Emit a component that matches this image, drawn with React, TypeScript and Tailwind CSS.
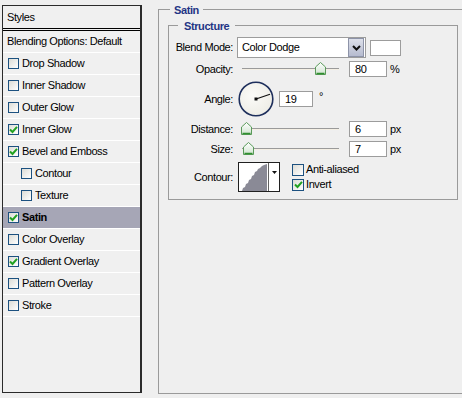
import React from "react";

const layers = [
  { name: "Drop Shadow", on: false },
  { name: "Inner Shadow", on: false },
  { name: "Outer Glow", on: false },
  { name: "Inner Glow", on: true },
  { name: "Bevel and Emboss", on: true },
  { name: "Contour", on: false, sub: true },
  { name: "Texture", on: false, sub: true },
  { name: "Satin", on: true, active: true },
  { name: "Color Overlay", on: false },
  { name: "Gradient Overlay", on: true },
  { name: "Pattern Overlay", on: false },
  { name: "Stroke", on: false },
];

function CheckBox({ on, big }: { on: boolean; big?: boolean }) {
  return (
    <span
      className={
        big
          ? "flex h-[12px] w-[12px] shrink-0 items-center justify-center border border-[#1c5180] bg-linear-to-br from-[#dcdcd6] to-white"
          : "flex h-[11px] w-[11px] shrink-0 items-center justify-center border border-[#1c5180] bg-linear-to-br from-[#dcdcd6] to-white"
      }
    >
      {on && (
        <svg width="9" height="9" viewBox="0 0 9 9">
          <path d="M1 4.5 L3.5 7 L8 1.8" fill="none" stroke="#21a121" strokeWidth="2" />
        </svg>
      )}
    </span>
  );
}

function Thumb() {
  return (
    <svg width="11" height="13" viewBox="0 0 11 13">
      <defs>
        <linearGradient id="tg" x1="0" y1="0" x2="0" y2="1">
          <stop offset="0" stopColor="#ffffff" />
          <stop offset="1" stopColor="#cfe3cf" />
        </linearGradient>
      </defs>
      <path d="M5.5 0.5 L10.5 5 L10.5 12.5 L0.5 12.5 L0.5 5 Z" fill="url(#tg)" stroke="#5a9a5a" />
      <path d="M1.5 11.5 H9.5" stroke="#2f8f2f" strokeWidth="1.5" />
    </svg>
  );
}

function Slider({ left }: { left: number }) {
  return (
    <div className="relative ml-[4px] h-full w-[108px]">
      <div className="absolute left-[5px] top-[7px] h-[2px] w-[97px] border-t border-[#9a9a9a] bg-[#f4efe4]" />
      <div className="absolute top-[1px]" style={{ left }}>
        <Thumb />
      </div>
    </div>
  );
}

function NumBox({ value, wide }: { value: string; wide?: boolean }) {
  return (
    <div
      className={
        wide
          ? "flex h-[16px] w-[38px] items-center border border-[#9c9c9c] bg-white pl-[5px]"
          : "flex h-[16px] w-[34px] items-center border border-[#9c9c9c] bg-white pl-[5px]"
      }
    >
      {value}
    </div>
  );
}

function Label({ children }: { children: React.ReactNode }) {
  return <div className="w-[64px] shrink-0 text-right">{children}</div>;
}

export default function App() {
  return (
    <div className="flex h-[398px] w-[462px] overflow-hidden bg-[#efefef] font-['Liberation_Sans',Arial,sans-serif] text-[11px] tracking-[-0.4px] text-black">
      {/* styles list */}
      <div className="ml-[2px] mt-[5px] flex h-[388px] w-[140px] flex-col border border-r-2 border-[#2b2b2b] bg-[#f0f0f0]">
        <div className="flex h-[25px] items-center border-b-[3px] border-double border-black pl-[4px]">Styles</div>
        <div className="flex h-[22px] items-center border-b border-white pl-[4px]">Blending Options: Default</div>
        {layers.map((l) => (
          <div
            key={l.name}
            className={`flex h-[22px] items-center gap-[3px] border-b border-white ${l.sub ? "pl-[18px]" : "pl-[5px]"} ${
              l.active ? "bg-[#a6a6b6] font-bold" : ""
            }`}
          >
            <CheckBox on={l.on} />
            <span>{l.name}</span>
          </div>
        ))}
      </div>

      {/* satin settings */}
      <div className="relative ml-[16px] mt-[9px] h-[385px] flex-1 border-y border-l border-[#9a9a9a]">
        <div className="absolute -top-[8px] left-[11px] bg-[#efefef] px-[4px] font-bold text-[#1f3585]">Satin</div>

        <div className="relative ml-[9px] mt-[15px] h-[175px] w-[290px] border border-[#9a9a9a] pt-[11px]">
          <div className="absolute -top-[8px] left-[9px] bg-[#efefef] px-[6px] font-bold text-[#1f3585]">Structure</div>

          <div className="flex h-[21px] items-center">
            <Label>Blend Mode:</Label>
            <div className="ml-[4px] flex h-full w-[129px] items-center border border-[#9c9c9c] bg-white">
              <span className="flex-1 pl-[4px]">Color Dodge</span>
              <span className="mr-[1px] flex h-[19px] w-[16px] items-center justify-center border border-[#8d93a8] bg-linear-to-b from-[#dde0ea] to-[#b6bbcf]">
                <svg width="9" height="6" viewBox="0 0 9 6">
                  <path d="M1 1 L4.5 4.5 L8 1" fill="none" stroke="#101010" strokeWidth="2" />
                </svg>
              </span>
            </div>
            <div className="ml-[4px] h-[16px] w-[31px] border border-[#9c9c9c] bg-white" />
          </div>

          <div className="mt-[3px] flex h-[16px] items-center">
            <Label>Opacity:</Label>
            <Slider left={78} />
            <div className="ml-[4px]">
              <NumBox value="80" wide />
            </div>
            <span className="ml-[3px]">%</span>
          </div>

          <div className="mt-[4px] flex h-[36px] items-center">
            <Label>Angle:</Label>
            <svg className="ml-[5px]" width="36" height="36" viewBox="0 0 36 36">
              <defs>
                <radialGradient id="dg" cx="0.4" cy="0.4" r="0.7">
                  <stop offset="0" stopColor="#fbfbf8" />
                  <stop offset="1" stopColor="#ecebe4" />
                </radialGradient>
              </defs>
              <circle cx="18" cy="18" r="16.8" fill="url(#dg)" stroke="#1e2f5c" strokeWidth="1.6" />
              <line x1="18" y1="18" x2="32" y2="13.2" stroke="#101010" strokeWidth="1.2" />
              <rect x="16.5" y="16.5" width="3" height="3" fill="#101010" />
            </svg>
            <div className="ml-[5px]">
              <NumBox value="19" />
            </div>
            <span className="mb-[6px] ml-[6px]">°</span>
          </div>

          <div className="mt-[4px] flex h-[16px] items-center">
            <Label>Distance:</Label>
            <Slider left={4} />
            <div className="ml-[4px]">
              <NumBox value="6" wide />
            </div>
            <span className="ml-[3px]">px</span>
          </div>

          <div className="mt-[4px] flex h-[16px] items-center">
            <Label>Size:</Label>
            <Slider left={6} />
            <div className="ml-[4px]">
              <NumBox value="7" wide />
            </div>
            <span className="ml-[3px]">px</span>
          </div>

          <div className="mt-[5px] flex h-[30px] items-center">
            <Label>Contour:</Label>
            <div className="ml-[5px] flex h-[30px] w-[42px] border border-[#202020] bg-white">
              <svg width="29" height="28" viewBox="0 0 29 28">
                <path
                  d="M3 28 L4 25 L6 24 L7 21 L9 20 L10 17 L12 16 L13 13 L15 12 L16 9 L18 8 L19 6 L21 5 L23 3 L25 2 L28 1 L28 28 Z"
                  fill="#8a8a96"
                />
              </svg>
              <div className="flex flex-1 items-start justify-center border-l border-[#606060] pt-[8px]">
                <svg width="5" height="3" viewBox="0 0 5 3">
                  <path d="M0 0 H5 L2.5 3 Z" fill="#101010" />
                </svg>
              </div>
            </div>
            <div className="ml-[12px] flex flex-col">
              <div className="flex h-[15px] items-center gap-[2px]">
                <CheckBox on={false} big />
                <span>Anti-aliased</span>
              </div>
              <div className="flex h-[15px] items-center gap-[2px]">
                <CheckBox on big />
                <span>Invert</span>
              </div>
            </div>
          </div>
        </div>
      </div>
    </div>
  );
}
